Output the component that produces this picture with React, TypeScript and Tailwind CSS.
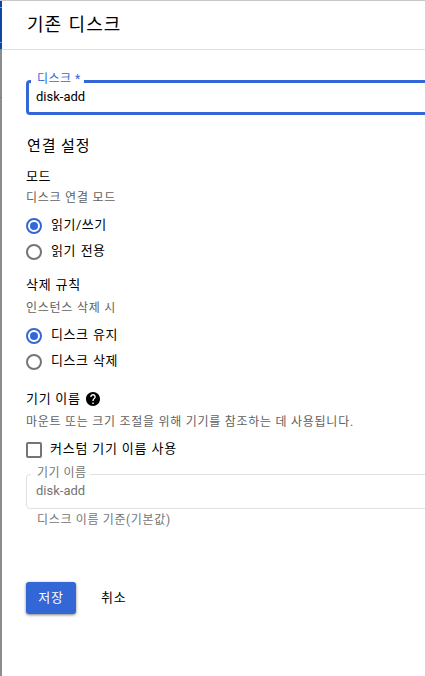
import React, { useState } from 'react';

interface Option {
  id: string;
  label: string;
}

const MODES: Option[] = [
  { id: 'rw', label: '읽기/쓰기' },
  { id: 'ro', label: '읽기 전용' },
];

const DELETE_RULES: Option[] = [
  { id: 'keep', label: '디스크 유지' },
  { id: 'delete', label: '디스크 삭제' },
];

interface RadioListProps {
  options: Option[];
  value: string;
  onChange: (id: string) => void;
}

const RadioList: React.FC<RadioListProps> = ({ options, value, onChange }) => (
  <div role="radiogroup">
    {options.map(option => (
      <button
        key={option.id}
        role="radio"
        aria-checked={value === option.id}
        onClick={() => onChange(option.id)}
        className="flex h-[26px] items-center gap-[9px]"
      >
        <span
          className={`flex size-4 items-center justify-center rounded-full border-2 ${
            value === option.id ? 'border-[#3367d6]' : 'border-[#757575]'
          }`}
        >
          {value === option.id && <span className="size-2 rounded-full bg-[#3367d6]" />}
        </span>
        <span className="-mt-0.5 text-[13px] tracking-[0.5px] [word-spacing:1px]">{option.label}</span>
      </button>
    ))}
  </div>
);

const App: React.FC = () => {
  const [mode, setMode] = useState('rw');
  const [rule, setRule] = useState('keep');
  const [custom, setCustom] = useState(false);

  return (
    <div className="flex h-[676px] w-[425px] overflow-hidden border-t border-[#c8c8c8] bg-white font-[Roboto,'Noto_Sans_CJK_KR',sans-serif] text-black">
      {/* Edge of the page behind the panel */}
      <div className="flex w-0.5 shrink-0 flex-col bg-[#8c8c8c]">
        <div className="h-[6px] bg-[#0d47a1]" />
        <div className="h-px bg-[#6f93c4]" />
        <div className="h-[34px] bg-[#0d47a1]" />
        <div className="h-px bg-[#6f93c4]" />
        <div className="h-[6px] bg-[#0d47a1]" />
        <div className="mt-12 h-px bg-[#7b7b7b]" />
      </div>

      <div className="min-w-0 flex-1">
        <header className="flex h-[49px] items-center border-b border-[#e0e0e0] pl-[25px]">
          <h1 className="-mt-0.5 text-[18px] tracking-[1px] [word-spacing:1px]">기존 디스크</h1>
        </header>

        <div className="pl-6">
          <fieldset className="-mr-2 mt-[19px] h-[46px] rounded border-[3px] border-[#3367d6] pl-[2px]">
            <legend className="pb-[5px] pl-[6px] pr-[3px] text-[12px] leading-5 tracking-[0.5px] text-[#3367d6]">
              디스크 *
            </legend>
            <div className="-mt-[7px] ml-[5px] text-[13px] leading-5">disk-add</div>
          </fieldset>

          <h2 className="ml-px mt-[21px] text-[15px] leading-5 tracking-[0.9px]">연결 설정</h2>

          <h3 className="mt-[11px] text-[13px] leading-5 tracking-[0.5px]">모드</h3>
          <p className="mb-[5px] mt-px text-[12px] leading-5 tracking-[0.75px] text-[#616161]">디스크 연결 모드</p>
          <RadioList options={MODES} value={mode} onChange={setMode} />

          <h3 className="mt-[10px] text-[13px] leading-5 tracking-[0.8px]">삭제 규칙</h3>
          <p className="mb-[5px] mt-[3px] text-[12px] leading-5 tracking-[0.75px] text-[#616161]">인스턴스 삭제 시</p>
          <RadioList options={DELETE_RULES} value={rule} onChange={setRule} />

          <h3 className="mt-[14px] flex items-center text-[13px] leading-5 tracking-[0.7px]">
            기기 이름
            <svg viewBox="2 2 20 20" className="ml-[5px] size-[14px]">
              <path d="M12 2C6.48 2 2 6.48 2 12s4.48 10 10 10 10-4.48 10-10S17.52 2 12 2zm1 17h-2v-2h2v2zm2.07-7.75l-.9.92C13.45 12.9 13 13.5 13 15h-2v-.5c0-1.1.45-2.1 1.17-2.83l1.24-1.26c.37-.36.59-.86.59-1.41 0-1.1-.9-2-2-2s-2 .9-2 2H8c0-2.21 1.79-4 4-4s4 1.79 4 4c0 .88-.36 1.68-.93 2.25z" />
            </svg>
          </h3>
          <p className="mt-[3px] text-[12px] leading-5 tracking-[0.73px] text-[#616161]">
            마운트 또는 크기 조절을 위해 기기를 참조하는 데 사용됩니다.
          </p>

          <button
            role="checkbox"
            aria-checked={custom}
            onClick={() => setCustom(!custom)}
            className="mt-[8px] flex h-5 items-center gap-2"
          >
            <span className={`size-4 rounded-[2px] border-2 border-[#757575] ${custom ? 'bg-[#3367d6]' : ''}`} />
            <span className="-mt-0.5 text-[13px] tracking-[0.8px]">커스텀 기기 이름 사용</span>
          </button>

          <fieldset className="-mr-2 mt-[3px] h-[46px] rounded border border-[#e0e0e0] pl-1 text-[#757575]">
            <legend className="pb-[3px] pl-[6px] pr-[3px] text-[12px] leading-5 tracking-[0.5px]">기기 이름</legend>
            <div className="-mt-[5px] ml-[5px] text-[13px] leading-5">disk-add</div>
          </fieldset>
          <p className="ml-[11px] mt-px text-[12px] leading-5 tracking-[0.65px] text-[#757575]">
            디스크 이름 기준(기본값)
          </p>

          <div className="mt-[52px] flex h-8 text-[13px] tracking-[0.8px]">
            <button className="w-[50px] rounded-[3px] bg-[#3367d6] text-white shadow-[0_1px_3px_rgba(0,0,0,0.5)]">저장</button>
            <button className="ml-[25px]">취소</button>
          </div>
        </div>
      </div>
    </div>
  );
};

export default App;
